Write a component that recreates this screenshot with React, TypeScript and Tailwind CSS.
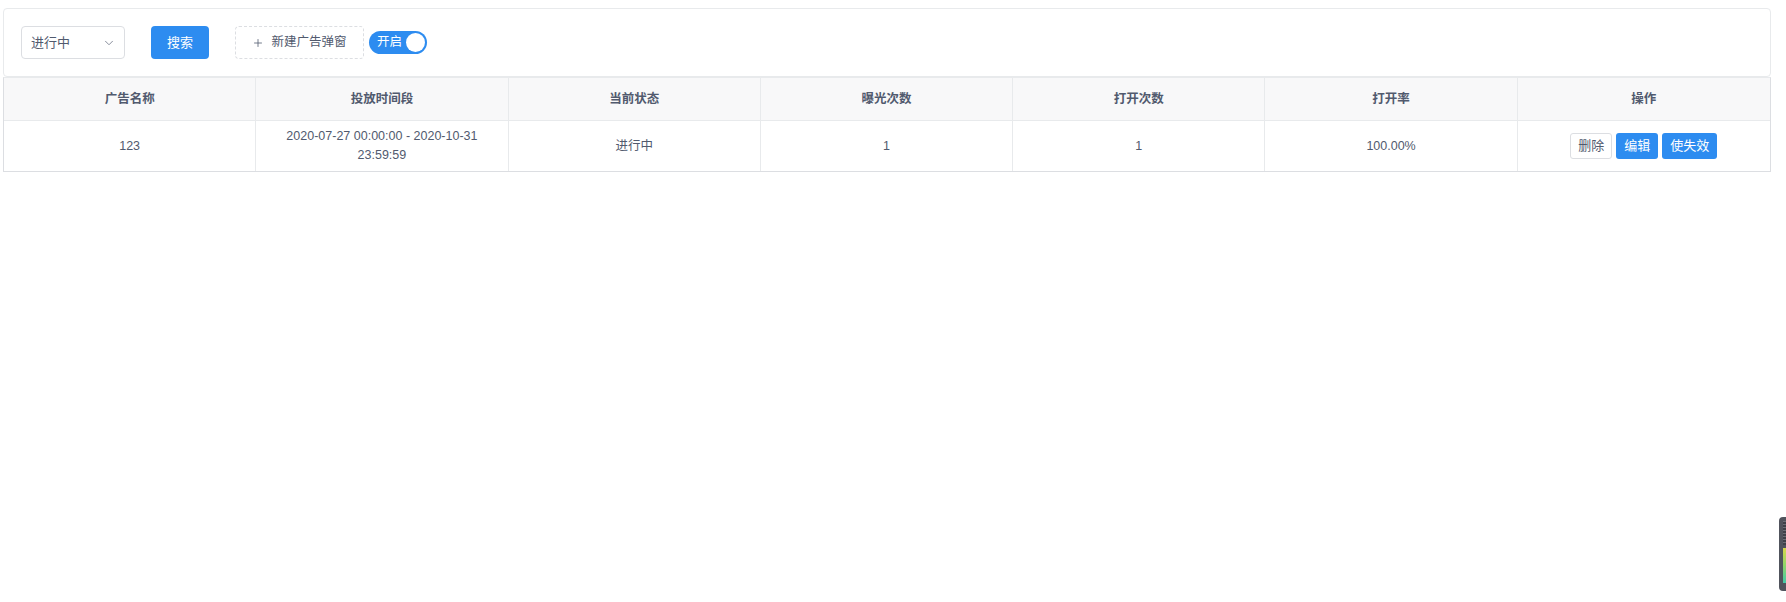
import { ChevronDown, Plus } from "lucide-react";

const columns = ["广告名称", "投放时间段", "当前状态", "曝光次数", "打开次数", "打开率", "操作"];

const rows = [
  {
    name: "123",
    period: "2020-07-27 00:00:00 - 2020-10-31 23:59:59",
    status: "进行中",
    views: "1",
    opens: "1",
    rate: "100.00%",
  },
];

function Toolbar() {
  return (
    <div className="flex items-center h-[69px] px-[17px] border border-[#e8eaec] rounded-[4px] bg-white">
      {/* status select */}
      <div className="flex items-center justify-between w-[104px] h-[33px] pl-[9px] pr-[8px] border border-[#dcdee2] rounded-[4px] text-[13px] text-[#515a6e]">
        <span>进行中</span>
        <ChevronDown className="w-[14px] h-[14px] text-[#808695]" strokeWidth={1.6} />
      </div>
      <button className="ml-[26px] w-[58px] h-[33px] rounded-[4px] bg-[#2d8cf0] text-white text-[13px]">
        搜索
      </button>
      <button className="ml-[26px] flex items-center justify-center gap-[7px] w-[129px] h-[33px] rounded-[4px] border border-dashed border-[#dcdee2] text-[12.5px] text-[#515a6e]">
        <Plus className="w-[12px] h-[12px]" strokeWidth={1.6} />
        <span>新建广告弹窗</span>
      </button>
      {/* switch */}
      <div className="ml-[5px] relative flex items-center w-[58px] h-[23px] rounded-full bg-[#2d8cf0]">
        <span className="pl-[8px] text-[12.5px] text-white leading-none">开启</span>
        <span className="absolute right-[2px] top-[2px] w-[19px] h-[19px] rounded-full bg-white" />
      </div>
    </div>
  );
}

function Table() {
  return (
    <div className="border border-[#dcdee2] border-t-[#e8eaec] text-[12.5px] text-[#515a6e]">
      <div className="grid grid-cols-7 h-[43px] bg-[#f8f8f9] border-b border-[#e8eaec]">
        {columns.map((c, i) => (
          <div
            key={c}
            className={`flex items-center justify-center font-bold ${i < columns.length - 1 ? "border-r border-[#e8eaec]" : ""}`}
          >
            {c}
          </div>
        ))}
      </div>
      {rows.map((r) => (
        <div key={r.name} className="grid grid-cols-7 h-[50px]">
          <div className="flex items-center justify-center border-r border-[#e8eaec]">{r.name}</div>
          <div className="flex items-center justify-center text-center px-[18px] leading-[19px] border-r border-[#e8eaec]">
            {r.period}
          </div>
          <div className="flex items-center justify-center border-r border-[#e8eaec]">{r.status}</div>
          <div className="flex items-center justify-center border-r border-[#e8eaec]">{r.views}</div>
          <div className="flex items-center justify-center border-r border-[#e8eaec]">{r.opens}</div>
          <div className="flex items-center justify-center border-r border-[#e8eaec]">{r.rate}</div>
          <div className="flex items-center justify-center gap-[4px] text-[13px]">
            <button className="h-[26px] px-[7px] rounded-[3px] border border-[#dcdee2] bg-white text-[#515a6e]">
              删除
            </button>
            <button className="h-[26px] px-[8px] rounded-[3px] bg-[#2d8cf0] text-white">编辑</button>
            <button className="h-[26px] px-[8px] rounded-[3px] bg-[#2d8cf0] text-white">使失效</button>
          </div>
        </div>
      ))}
    </div>
  );
}

export default function App() {
  return (
    <div
      className="relative w-[1786px] h-[602px] bg-white overflow-hidden"
      style={{ fontFamily: '"Liberation Sans", "Noto Sans CJK SC", sans-serif' }}
    >
      <div className="pt-[8px] pl-[3px] pr-[15px]">
        <Toolbar />
        <Table />
      </div>

      {/* side widget peeking from the right edge */}
      <div className="absolute right-0 top-[517px] w-[7px] h-[74px] rounded-l-[4px] bg-[#50535c] flex flex-col items-end pt-[4px] pb-[8px]">
        <div className="w-[3px] h-[24px] bg-[repeating-linear-gradient(#6b6e76_0px,#6b6e76_1px,#3e4048_1px,#3e4048_3px)]" />
        <div className="mt-[3px] w-[3px] flex-1 bg-[linear-gradient(#d8d84a,#8fd66a,#43c9a8)]" />
      </div>
    </div>
  );
}
